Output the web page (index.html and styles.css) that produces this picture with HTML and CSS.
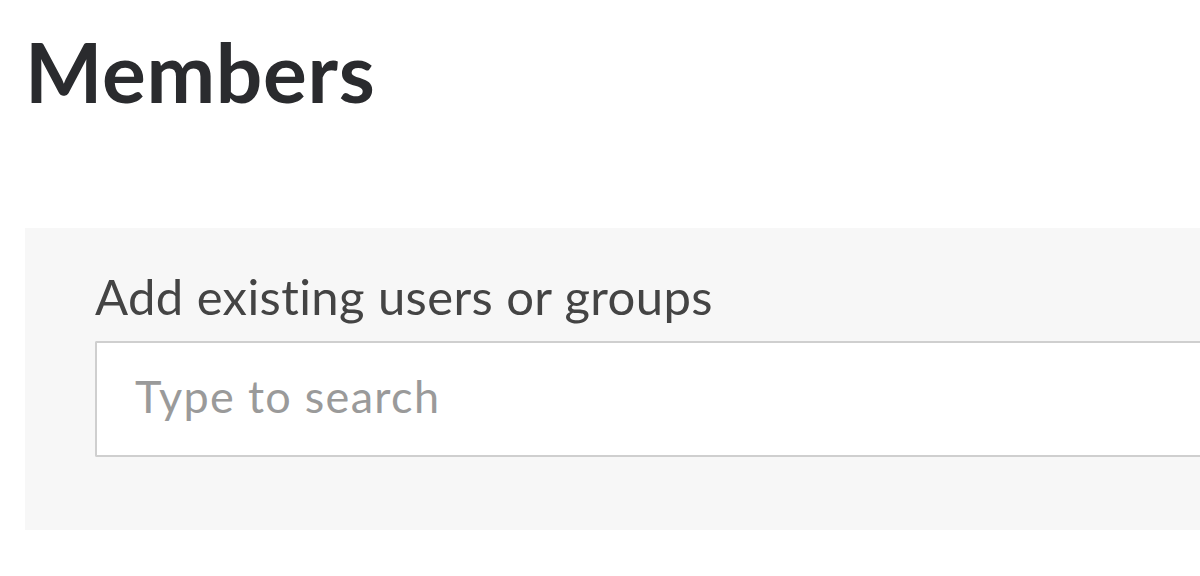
FILE: index.html
```html
<!DOCTYPE html>
<html lang="en">
<head>
  <meta charset="UTF-8" />
  <meta name="viewport" content="width=device-width, initial-scale=1" />
  <title>Members</title>
  <link rel="stylesheet" href="styles.css">
</head>
<body>

  <div class="page">
    <h1 class="page-title">Members</h1>

    <div class="add-panel">
      <label class="add-label" for="memberSearch">Add existing users or groups</label>
      <input class="add-input" id="memberSearch" type="text" placeholder="Type to search" />
    </div>
  </div>

</body>
</html>
```

FILE: styles.css
```css
body {
  font-family: Lato, 'Open Sans', sans-serif;
  font-variant-ligatures: none;
  background: #fff;
  margin: 0;
  padding: 0;
}
.page {
  padding-left: 25px;
}
.page-title {
  margin: 0;
  padding: 21px 0 0 0;
  font-size: 82px;
  font-weight: 700;
  letter-spacing: 0.7px;
  line-height: 100px;
  color: #2a2b2e;
}
.add-panel {
  margin-top: 107px;
  background: #f7f7f7;
  height: 302px;
  box-sizing: border-box;
  padding: 38px 0 0 70px;
}
.add-label {
  display: block;
  font-size: 49px;
  letter-spacing: 0.4px;
  line-height: 60px;
  color: #444;
  margin-bottom: 15px;
}
.add-input {
  display: block;
  width: 100%;
  height: 116px;
  box-sizing: border-box;
  border: 2px solid #cfcfcf;
  border-right: none;
  border-radius: 2px 0 0 2px;
  background: #fff;
  padding: 0 38px 6px 38px;
  font-family: Lato, 'Open Sans', sans-serif;
  font-variant-ligatures: none;
  font-size: 45px;
  letter-spacing: 1.3px;
  color: #333;
  outline: none;
}
.add-input::placeholder {
  color: #9a9a9a;
}
```
